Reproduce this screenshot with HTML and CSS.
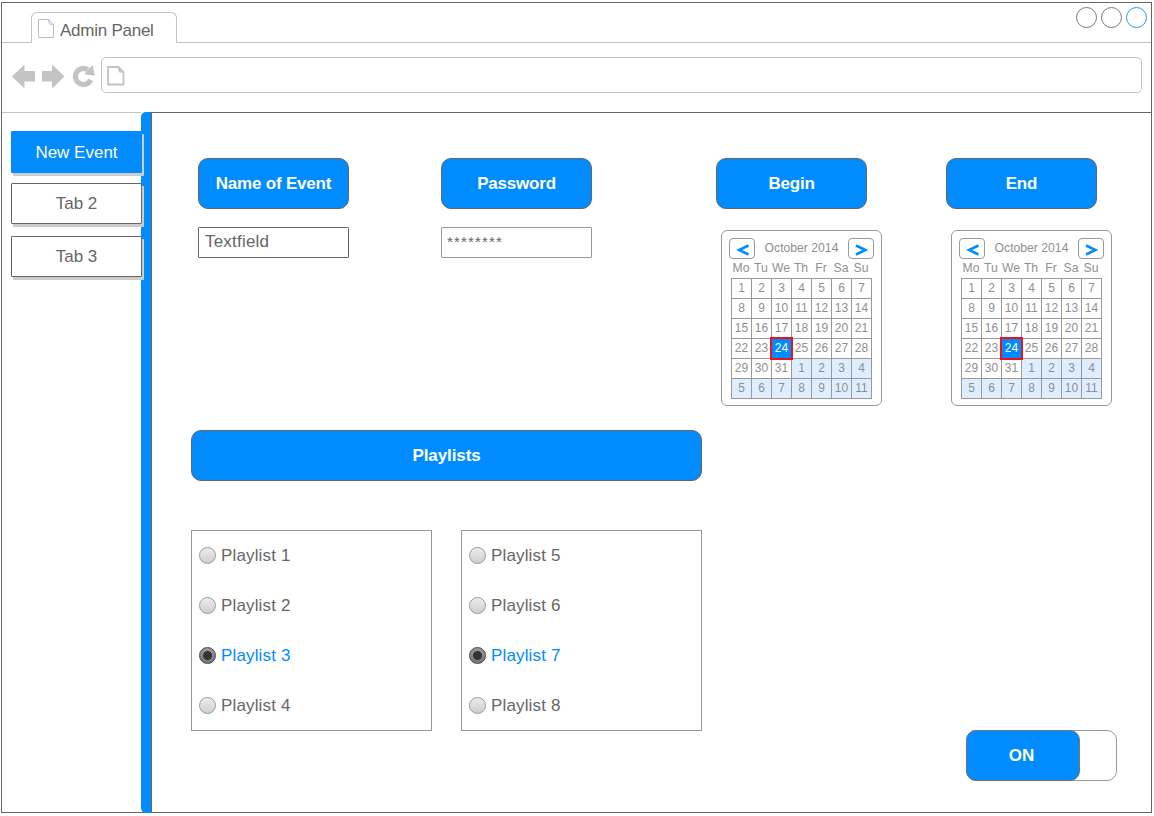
FILE: index.html
```html
<!DOCTYPE html>
<html lang="en">
<head>
<meta charset="utf-8">
<title>Admin Panel</title>
<link rel="stylesheet" href="styles.css">
</head>
<body>
<div class="window">
  <header class="titlebar">
    <div class="strip-start"></div>
    <div class="page-tab">
      <svg class="tab-icon" width="18" height="20" viewBox="0 0 18 20"><path d="M1.5 0.5H11.500L16.500 5.500V18.500H1.500ZM11.500 0.500L12.500 5L16.500 5.500" fill="none" stroke="#bdbdbd"/></svg>
      <span>Admin Panel</span>
    </div>
    <div class="strip-end">
      <i class="dot"></i><i class="dot"></i><i class="dot dot-active"></i>
    </div>
  </header>
  <div class="toolbar">
    <svg class="nav-icons" width="84" height="26" viewBox="11 63 84 26" fill="#c3c3c3">
      <path d="M12 76.500L24.500 64.500V71H35V81.500H24.500V88.500Z"/>
      <path d="M64.500 76.500L52 64.500V71H42V81.500H52V88.500Z"/>
      <path d="M90.700 79.800A8 8 0 1 1 88 69.900" fill="none" stroke="#c3c3c3" stroke-width="5.200"/>
      <path d="M92.700 65L94.700 75.800L84 74.300Z"/>
    </svg>
    <div class="address">
      <svg width="20" height="22" viewBox="0 0 20 22"><path d="M2 2H12.500L17.500 7V19.500H2ZM12.500 2L13.500 6.500L17.500 7" fill="none" stroke="#c3c3c3" stroke-width="1.800"/></svg>
    </div>
  </div>
  <div class="body">
    <nav class="sidebar">
      <a class="side-tab side-tab-active">New Event</a>
      <a class="side-tab">Tab 2</a>
      <a class="side-tab">Tab 3</a>
    </nav>
    <div class="divider"></div>
    <main class="content">
      <section class="fields">
        <div class="field">
          <div class="label">Name of Event</div>
          <div class="input">Textfield</div>
        </div>
        <div class="field">
          <div class="label">Password</div>
          <div class="input input-password">********</div>
        </div>
        <div class="date">
          <div class="label">Begin</div>
          <div class="calendar"></div>
        </div>
        <div class="date">
          <div class="label">End</div>
          <div class="calendar"></div>
        </div>
      </section>
      <div class="label label-wide">Playlists</div>
      <section class="bottom">
        <div class="list">
          <div class="option"><i class="radio"></i>Playlist 1</div>
          <div class="option"><i class="radio"></i>Playlist 2</div>
          <div class="option option-on"><i class="radio"></i>Playlist 3</div>
          <div class="option"><i class="radio"></i>Playlist 4</div>
        </div>
        <div class="list">
          <div class="option"><i class="radio"></i>Playlist 5</div>
          <div class="option"><i class="radio"></i>Playlist 6</div>
          <div class="option option-on"><i class="radio"></i>Playlist 7</div>
          <div class="option"><i class="radio"></i>Playlist 8</div>
        </div>
        <div class="toggle"><div class="toggle-on">ON</div></div>
      </section>
    </main>
  </div>
</div>
<script src="calendar.js"></script>
</body>
</html>
```

FILE: styles.css
```css
* { box-sizing: border-box; }
body {
  margin: 0;
  background: #fff;
  color: #666;
  font: 17px/20px "Liberation Sans", Arial, sans-serif;
}
.window {
  display: flex;
  flex-direction: column;
  width: 1151px;
  height: 811px;
  margin: 2px 0 0 1px;
  border: 1px solid #666;
}
.titlebar { display: flex; height: 40px; }
.strip-start { width: 29px; border-bottom: 1px solid #c3c3c3; }
.page-tab {
  display: flex;
  align-items: flex-start;
  gap: 5px;
  width: 146px;
  margin-top: 9px;
  padding: 6px 0 0 5px;
  border: 1px solid #c3c3c3;
  border-bottom: 0;
  border-radius: 6px 6px 0 0;
}
.page-tab span { margin-top: 2px; letter-spacing: -0.25px; }
.strip-end {
  display: flex;
  flex: 1;
  justify-content: flex-end;
  gap: 4px;
  padding: 4px 4px 0 0;
  border-bottom: 1px solid #c3c3c3;
}
.dot {
  width: 21px;
  height: 21px;
  border: 1px solid #777;
  border-radius: 50%;
}
.dot-active { border-color: #2b95ee; }
.toolbar { display: flex; height: 69px; padding: 14px 9px 0; }
.nav-icons { margin: 6px 6px 0 0; }
.address {
  flex: 1;
  height: 36px;
  padding: 7px 4px;
  border: 1px solid #c3c3c3;
  border-radius: 5px;
}
.address svg, .page-tab svg { display: block; }
.body { display: flex; flex: 1; margin-bottom: -1px; }
.sidebar {
  display: flex;
  flex-direction: column;
  flex: 0 0 139px;
  width: 139px;
  padding: 18px 0 0 9px;
  border-top: 1px solid #c3c3c3;
}
.side-tab {
  position: relative;
  z-index: 1;
  width: 131px;
  height: 41px;
  margin-bottom: 12px;
  border: 1px solid #666;
  border-radius: 1px;
  background: #fff;
  box-shadow: 2px 3px 0 #ccc;
  line-height: 39px;
  text-align: center;
}
.side-tab-active {
  height: 42px;
  margin-bottom: 10px;
  border-color: #008cff;
  background: #008cff;
  color: #fff;
  line-height: 41px;
}
.divider {
  flex: 0 0 11px;
  border-right: 1px solid #666;
  border-radius: 5px 0 0 5px;
  background: #008cff;
}
.content { flex: 1; min-width: 0; border-top: 1px solid #666; padding: 45px 0 0 39px; }
.fields { display: flex; height: 248px; padding-left: 7px; }
.field { flex: none; width: 151px; margin-right: 92px; }
.date { flex: none; width: 166px; margin-right: 64px; }
.date:nth-child(3) { margin-left: 32px; }
.date:last-child { margin-right: 0; }
.label {
  width: 151px;
  height: 51px;
  border: 1px solid #666;
  border-radius: 10px;
  background: #008cff;
  color: #fff;
  font-weight: bold;
  letter-spacing: -0.2px;
  line-height: 49px;
  text-align: center;
}
.label-wide { width: 511px; margin-top: 24px; letter-spacing: -0.1px; }
.input {
  height: 31px;
  margin-top: 18px;
  padding: 4px 6px;
  border: 1px solid #666;
  border-radius: 1px;
  letter-spacing: 0.2px;
}
.input-password {
  padding-left: 5px;
  border-color: #999;
  font-size: 15px;
  letter-spacing: 1.15px;
}
.calendar {
  width: 161px;
  height: 176px;
  margin: 21px 0 0 5px;
  padding: 7px;
  border: 1px solid #999;
  border-radius: 6px;
  color: #8f8f8f;
  font-size: 12.2px;
  text-align: center;
}
.cal-head { display: flex; justify-content: space-between; line-height: 20px; }
.cal-btn {
  width: 26px;
  height: 21px;
  border: 1px solid #999;
  border-radius: 4px;
}
.cal-btn svg { display: block; }
.weekdays, .days { display: grid; grid-template-columns: repeat(7, 20px); }
.weekdays { height: 19px; padding-left: 2px; line-height: 18px; }
.days {
  width: 141px;
  margin-left: 2px;
  border: solid #999;
  border-width: 1px 0 0 1px;
  font-size: 12px;
}
.day {
  height: 20px;
  border: solid #999;
  border-width: 0 1px 1px 0;
  line-height: 18px;
}
.day-next { background: #deeeff; }
.day-selected { position: relative; background: #008cff; color: #fff; }
.day-selected::after {
  content: "";
  position: absolute;
  inset: -2px;
  border: 2px solid #f01018;
}
.bottom { display: flex; height: 251px; margin-top: 49px; }
.list {
  flex: none;
  width: 241px;
  height: 201px;
  margin-right: 29px;
  border: 1px solid #999;
}
.list + .list { margin-right: 264px; }
.option {
  display: flex;
  align-items: center;
  gap: 5px;
  height: 50px;
  padding-left: 7px;
  letter-spacing: 0.15px;
}
.option-on { color: #008cff; }
.radio {
  width: 17px;
  height: 17px;
  margin-bottom: 2px;
  border: 1px solid #999;
  border-radius: 50%;
  background: linear-gradient(#ececec, #cfcfcf);
}
.option-on .radio {
  border-color: #444;
  background: radial-gradient(circle, #333 4px, transparent 5px), linear-gradient(#999, #777);
}
.toggle {
  flex: none;
  align-self: flex-end;
  width: 151px;
  height: 51px;
  border: 1px solid #999;
  border-radius: 10px;
}
.toggle-on {
  width: 114px;
  height: 51px;
  margin: -1px;
  border: 1px solid #777;
  border-radius: 10px;
  background: #008cff;
  color: #fff;
  font-weight: bold;
  line-height: 49px;
  text-align: center;
  text-indent: -3px;
}
```

FILE: calendar.js
```js
const weekdays = ["Mo", "Tu", "We", "Th", "Fr", "Sa", "Su"];
const chevron = (points) =>
  `<svg width="24" height="19" viewBox="0 0 24 19"><path d="${points}" fill="none" stroke="#008cff" stroke-width="2.5"/></svg>`;

function renderCalendar(root) {
  let days = "";
  for (let i = 1; i <= 42; i++) {
    const next = i > 31;
    const state = next ? " day-next" : i === 24 ? " day-selected" : "";
    days += `<div class="day${state}">${next ? i - 31 : i}</div>`;
  }
  root.innerHTML =
    `<div class="cal-head"><div class="cal-btn">${chevron("M18.5 6.5L9 11L18.5 15.5")}</div>` +
    `<span>October 2014</span>` +
    `<div class="cal-btn">${chevron("M7 6.5L16.5 11L7 15.5")}</div></div>` +
    `<div class="weekdays">${weekdays.map((d) => `<span>${d}</span>`).join("")}</div>` +
    `<div class="days">${days}</div>`;
}

document.querySelectorAll(".calendar").forEach(renderCalendar);
```
